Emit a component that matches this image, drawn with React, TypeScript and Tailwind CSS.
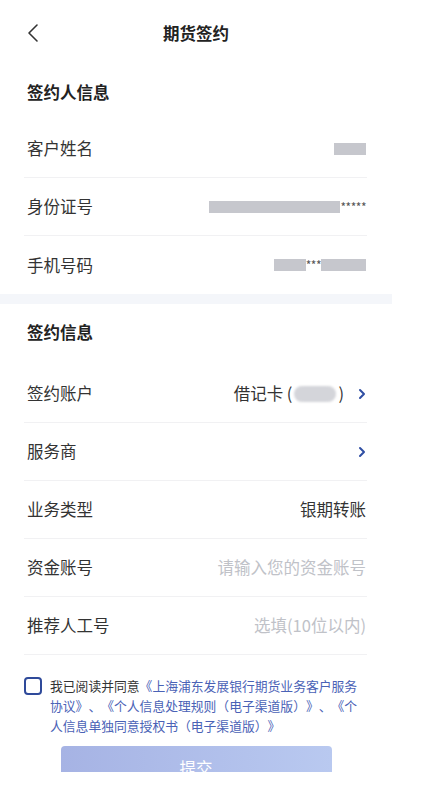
import React from 'react'

const font = { fontFamily: '"Noto Sans CJK SC", "Noto Sans", sans-serif' }

function Chevron() {
  return (
    <svg width="8" height="12" viewBox="0 0 8 12" className="ml-[14px]">
      <polyline points="2,2 6,6 2,10" fill="none" stroke="#2f4ea3" strokeWidth="2" strokeLinecap="round" strokeLinejoin="round" />
    </svg>
  )
}

function Blur({ w }: { w: number }) {
  return <span className="inline-block h-[12px] bg-[#c6c7cd] blur-[0.6px]" style={{ width: w }} />
}

function Row({ label, children, divider = true }: { label: string; children?: React.ReactNode; divider?: boolean }) {
  return (
    <div className={`h-[58px] flex items-center justify-between pl-[3px] pr-[1px] ${divider ? 'border-b border-[#f1f1f3]' : ''}`}>
      <span className="text-[16.5px] text-[#333]">{label}</span>
      <div className="flex items-center text-[16.5px] text-[#333]">{children}</div>
    </div>
  )
}

export default function App() {
  return (
    <div className="w-[392px] bg-white" style={font}>
      {/* nav */}
      <div className="h-[66px] grid grid-cols-[40px_1fr_40px] items-center px-[24px]">
        <svg width="12" height="20" viewBox="0 0 12 20" className="ml-[3px]">
          <polyline points="10,2 2,10 10,18" fill="none" stroke="#333" strokeWidth="1.6" strokeLinecap="round" strokeLinejoin="round" />
        </svg>
        <div className="text-center text-[16.5px] font-bold text-[#222]">期货签约</div>
        <div />
      </div>

      {/* signer info */}
      <div className="pl-[24px] pr-[25px]">
        <div className="h-[54px] flex items-center pl-[3px] pb-[1px] text-[16.5px] font-bold text-[#222]">签约人信息</div>
        <Row label="客户姓名">
          <Blur w={32} />
        </Row>
        <Row label="身份证号">
          <Blur w={131} />
          <span className="text-[12px] text-[#555] tracking-[-0.5px]">*****</span>
        </Row>
        <Row label="手机号码" divider={false}>
          <Blur w={32} />
          <span className="text-[12px] text-[#555] tracking-[-0.5px]">***</span>
          <Blur w={45} />
        </Row>
      </div>

      <div className="h-[10px] bg-[#f4f6fa]" />

      {/* sign info */}
      <div className="pl-[24px] pr-[25px]">
        <div className="h-[61px] flex items-center pl-[3px] pb-[4px] text-[16.5px] font-bold text-[#222]">签约信息</div>
        <Row label="签约账户">
          <span>借记卡 (</span>
          <span className="inline-block w-[42px] h-[16px] mx-[2px] rounded-full bg-[#d4d5da] blur-[0.8px]" />
          <span>)</span>
          <Chevron />
        </Row>
        <Row label="服务商">
          <Chevron />
        </Row>
        <Row label="业务类型">
          <span>银期转账</span>
        </Row>
        <Row label="资金账号">
          <span className="text-[#c0c2c8]">请输入您的资金账号</span>
        </Row>
        <Row label="推荐人工号">
          <span className="text-[#c0c2c8]">选填(10位以内)</span>
        </Row>
      </div>

      {/* agreement */}
      <div className="flex gap-[8px] pl-[24px] pr-[34px] pt-[21px]">
        <div className="shrink-0 w-[18px] h-[18px] mt-[1px] rounded-[4px] border-2 border-[#2f4a9a]" />
        <p className="text-[12.8px] leading-[20px] text-[#333] [text-spacing-trim:space-all]">
          我已阅读并同意
          <span className="text-[#4a62b6]">《上海浦东发展银行期货业务客户服务协议》、《个人信息处理规则（电子渠道版）》、《个人信息单独同意授权书（电子渠道版）》</span>
        </p>
      </div>

      {/* submit */}
      <div className="mt-[10px] h-[26px] overflow-hidden">
        <div className="mx-auto w-[271px] h-[44px] rounded-[4px] bg-gradient-to-r from-[#a6b3e4] to-[#b9c9f0] flex items-center justify-center text-[16.5px] text-white">
          提交
        </div>
      </div>
      <div className="h-[12px]" />
    </div>
  )
}
